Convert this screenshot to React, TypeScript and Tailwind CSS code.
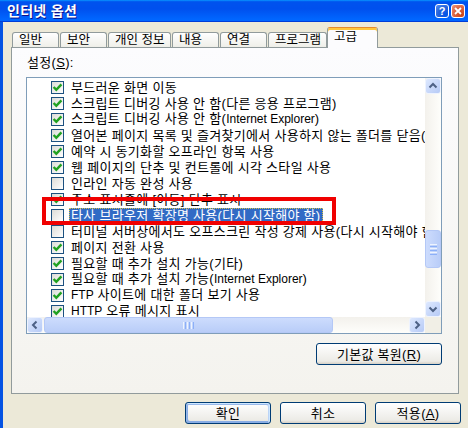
import React from 'react';

type Row = { on: boolean; text: string; sel?: boolean };

const rows: Row[] = [
  { on: true, text: '부드러운 화면 이동' },
  { on: true, text: '스크립트 디버깅 사용 안 함(다른 응용 프로그램)' },
  { on: true, text: '스크립트 디버깅 사용 안 함(Internet Explorer)' },
  { on: true, text: '열어본 페이지 목록 및 즐겨찾기에서 사용하지 않는 폴더를 닫음(다시 시작해야 함)' },
  { on: true, text: '예약 시 동기화할 오프라인 항목 사용' },
  { on: true, text: '웹 페이지의 단추 및 컨트롤에 시각 스타일 사용' },
  { on: false, text: '인라인 자동 완성 사용' },
  { on: true, text: '주소 표시줄에 [이동] 단추 표시' },
  { on: false, text: '타사 브라우저 확장명 사용(다시 시작해야 함)', sel: true },
  { on: false, text: '터미널 서버상에서도 오프스크린 작성 강제 사용(다시 시작해야 함)' },
  { on: true, text: '페이지 전환 사용' },
  { on: true, text: '필요할 때 추가 설치 가능(기타)' },
  { on: true, text: '필요할 때 추가 설치 가능(Internet Explorer)' },
  { on: true, text: 'FTP 사이트에 대한 폴더 보기 사용' },
  { on: true, text: 'HTTP 오류 메시지 표시' },
];

const tabs = [
  { label: '일반', w: 'w-[47px]' },
  { label: '보안', w: 'w-[47px]' },
  { label: '개인 정보', w: 'w-[63px]' },
  { label: '내용', w: 'w-[47px]' },
  { label: '연결', w: 'w-[47px]' },
  { label: '프로그램', w: 'w-[59px]' },
];

// latin runs are narrower in the original UI font
function Txt({ s }: { s: string }) {
  const parts = s.split(/([A-Za-z]+(?: [A-Za-z]+)*)/);
  return (
    <>
      {parts.map((p, i) =>
        i % 2 ? (
          <span key={i} className="text-[12px] tracking-normal">
            {p}
          </span>
        ) : (
          p
        )
      )}
    </>
  );
}

function Check({ on }: { on: boolean }) {
  return (
    <span className="w-[13px] h-[13px] shrink-0 border border-[#1c5180] bg-[linear-gradient(135deg,#dcdcd7,#ffffff)] flex items-center justify-center">
      {on && (
        <svg width="11" height="11" viewBox="0 0 11 11">
          <path d="M1.6 5 L4.3 7.8 L9.4 2.4" fill="none" stroke="#21a121" strokeWidth="2.5" />
        </svg>
      )}
    </span>
  );
}

const arrows = {
  up: 'M3.5 8.5 L7 5 L10.5 8.5',
  down: 'M3.5 5.5 L7 9 L10.5 5.5',
  left: 'M8.5 3.5 L5 7 L8.5 10.5',
  right: 'M5.5 3.5 L9 7 L5.5 10.5',
};

function ArrowBtn({ dir }: { dir: keyof typeof arrows }) {
  return (
    <div className="w-[16px] h-[16px] shrink-0 rounded-[3px] border border-[#eef3fe] bg-[linear-gradient(135deg,#dde8fe,#b6caf6)] flex items-center justify-center">
      <svg width="14" height="14" viewBox="0 0 14 14">
        <path d={arrows[dir]} fill="none" stroke="#4d6185" strokeWidth="2" />
      </svg>
    </div>
  );
}

function VScroll() {
  return (
    <div className="w-[16px] flex flex-col bg-[linear-gradient(90deg,#f3f1ec,#fefefb)]">
      <ArrowBtn dir="up" />
      <div className="h-[136px]" />
      <div className="h-[38px] rounded-[3px] border border-[#b4c8f6] bg-[linear-gradient(90deg,#cddcfd,#b9cdf8)] flex flex-col items-center justify-center gap-[1px]">
        <div className="w-[7px] h-[1px] bg-[#eef4fe]" />
        <div className="w-[7px] h-[1px] bg-[#8cb0f8]" />
        <div className="w-[7px] h-[1px] bg-[#eef4fe]" />
        <div className="w-[7px] h-[1px] bg-[#8cb0f8]" />
        <div className="w-[7px] h-[1px] bg-[#eef4fe]" />
        <div className="w-[7px] h-[1px] bg-[#8cb0f8]" />
      </div>
      <div className="flex-1" />
      <ArrowBtn dir="down" />
    </div>
  );
}

function HScroll() {
  return (
    <div className="flex-1 h-[16px] flex bg-[linear-gradient(180deg,#f3f1ec,#fefefb)]">
      <ArrowBtn dir="left" />
      <div className="w-[289px] h-[16px] ml-[1px] rounded-[3px] border border-[#b4c8f6] bg-[linear-gradient(180deg,#cddcfd,#b9cdf8)] flex items-center justify-center gap-[1px]">
        <div className="w-[1px] h-[7px] bg-[#eef4fe]" />
        <div className="w-[1px] h-[7px] bg-[#8cb0f8]" />
        <div className="w-[1px] h-[7px] bg-[#eef4fe]" />
        <div className="w-[1px] h-[7px] bg-[#8cb0f8]" />
        <div className="w-[1px] h-[7px] bg-[#eef4fe]" />
        <div className="w-[1px] h-[7px] bg-[#8cb0f8]" />
      </div>
      <div className="flex-1" />
      <ArrowBtn dir="right" />
    </div>
  );
}

function XpButton({ children, w, def }: { children: React.ReactNode; w: string; def?: boolean }) {
  return (
    <div
      className={`${w} h-[22px] rounded-[3px] border border-[#003c74] bg-[linear-gradient(180deg,#ffffff,#ecebe6_86%,#d6d0c5)] flex items-center justify-center leading-none ${
        def ? 'shadow-[inset_-1px_1px_#cee7ff,inset_1px_2px_#98b8ea,inset_-2px_2px_#bcd4f6,inset_1px_-1px_#89ade4,inset_2px_-2px_#89ade4]' : ''
      }`}
    >
      {children}
    </div>
  );
}

export default function App() {
  return (
    <div className="relative w-[468px] h-[428px] overflow-hidden bg-[#ece9d8] text-black text-[13px] tracking-[0.3px] font-['Liberation_Sans','Noto_Sans_CJK_KR',sans-serif] flex flex-col">
      {/* Title bar */}
      <div className="h-[22px] shrink-0 flex items-center pl-[7px] pr-[3px] bg-[linear-gradient(180deg,#0997ff,#0053ee_8%,#0050ee_40%,#0066ff_88%,#0066ff_93%,#005bff_95%,#003dd7_96%,#003dd7)]">
        <span className="flex-1 text-white font-bold text-[14px] leading-none [text-shadow:1px_1px_#0f1089]">인터넷 옵션</span>
        <div className="flex gap-[2px] items-center">
          <div className="w-[14px] h-[14px] rounded-[3px] border border-white bg-[radial-gradient(circle_at_80%_80%,#0054e9,#2663da_55%,#5a93f7)] flex items-center justify-center text-white font-bold text-[11px] leading-none tracking-normal">
            ?
          </div>
          <div className="w-[14px] h-[14px] rounded-[3px] border border-white bg-[radial-gradient(circle_at_80%_80%,#cc4616,#dc6542_55%,#f09a80)] flex items-center justify-center">
            <svg width="8" height="8" viewBox="0 0 8 8">
              <path d="M1 1 L7 7 M7 1 L1 7" stroke="white" strokeWidth="1.8" />
            </svg>
          </div>
        </div>
      </div>

      <div className="flex flex-1">
        <div className="w-[3px] bg-[#0553e3]" />
        <div className="flex-1 pl-[8px] pt-[5px] flex flex-col">
          {/* Tabs */}
          <div className="h-[20px] flex items-end text-[12.5px] tracking-normal">
            {tabs.map((t) => (
              <div
                key={t.label}
                className={`${t.w} ml-[1px] h-[15px] border border-b-0 border-[#919b9c] rounded-t-[3px] bg-[linear-gradient(180deg,#ffffff,#fafaf9_26%,#f0f0ea_95%,#ecebe5)] pl-[6px] leading-[14px] whitespace-nowrap`}
              >
                {t.label}
              </div>
            ))}
            <div className="relative z-10 w-[51px] h-[21px] -mb-[1px] border border-b-0 border-[#919b9c] border-t-[#e68b2c] rounded-t-[3px] bg-[#fcfcfe] shadow-[inset_0_2px_#ffc73c] pl-[6px] pt-[2px] leading-[14px]">
              고급
            </div>
          </div>

          {/* Panel */}
          <div className="w-[448px] h-[347px] border border-[#919b9c] bg-[linear-gradient(180deg,#fcfcfe,#f4f3ee)] flex flex-col pl-[14px] pr-[16px] pt-[7px]">
            <div className="pl-[1px] leading-[15px]">
              설정(<span className="underline">S</span>):
            </div>
            <div className="mt-[7px] w-[416px] h-[257px] border border-[#7f9db9] bg-white flex flex-col">
              <div className="flex flex-1 min-h-0">
                <div className="flex-1 overflow-hidden pt-[1px]">
                  {rows.map((r, i) => (
                    <div key={i} className="h-[16px] flex items-center pl-[24px] whitespace-nowrap">
                      <Check on={r.on} />
                      {r.sel ? (
                        <span className="ml-[5px] h-[15px] px-[1px] bg-[#316ac5] text-white border border-dotted border-[#d7c04a] leading-[13px]">
                          <Txt s={r.text} />
                        </span>
                      ) : (
                        <span className="ml-[5px] px-[2px] leading-[15px]">
                          <Txt s={r.text} />
                        </span>
                      )}
                    </div>
                  ))}
                </div>
                <VScroll />
              </div>
              <div className="flex h-[16px]">
                <HScroll />
                <div className="w-[16px] bg-[#f1efe6]" />
              </div>
            </div>
            <div className="mt-[9px] self-end">
              <XpButton w="w-[126px]">
                기본값 복원(<span className="underline">R</span>)
              </XpButton>
            </div>
          </div>

          {/* Dialog buttons */}
          <div className="mt-[8px] flex justify-end gap-[9px] pr-[7px]">
            <XpButton w="w-[86px]" def>
              확인
            </XpButton>
            <XpButton w="w-[86px]">취소</XpButton>
            <XpButton w="w-[86px]">
              적용(<span className="underline">A</span>)
            </XpButton>
          </div>
        </div>
      </div>

      {/* annotation box */}
      <div className="absolute left-[42px] top-[197px] w-[294px] h-[28px] border-4 border-[#f00000]" />
    </div>
  );
}
